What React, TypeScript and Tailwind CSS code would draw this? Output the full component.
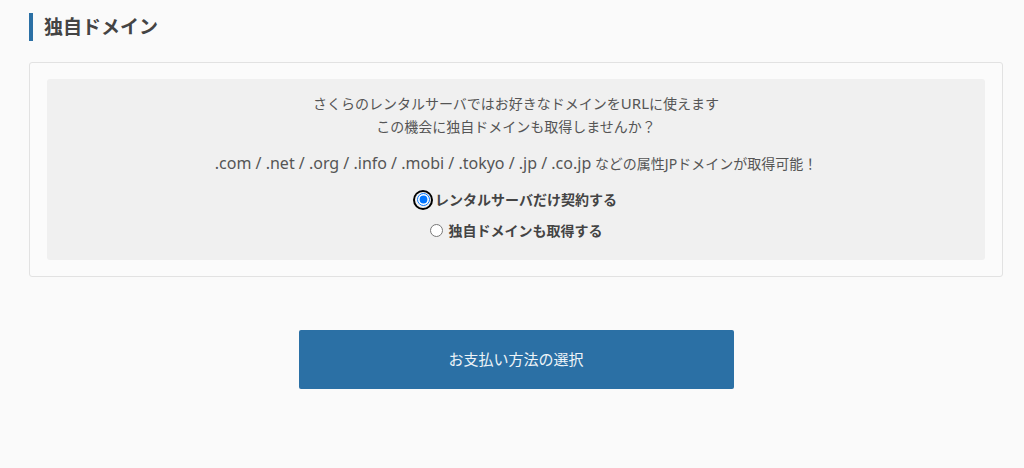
import React, { useState } from "react";

const font = {
  fontFamily: '"Noto Sans", "Noto Sans CJK JP", sans-serif',
};

const App = () => {
  const [choice, setChoice] = useState("rental");

  return (
    <div className="min-h-[468px] w-full bg-[#fafafa] text-[#555]" style={font}>
      <div className="pl-[29px] pr-[21px] pt-[13px]">
        <h2 className="flex h-[28px] items-center border-l-4 border-[#2b70a5] pl-[11px] text-[19px] font-bold leading-none text-[#444]">
          独自ドメイン
        </h2>

        <div className="mt-[21px] rounded-[3px] border border-[#e2e2e2] bg-[#fbfbfb] px-[17px] py-[16px]">
          <div className="flex flex-col items-center rounded-[3px] bg-[#f0f0f0] pt-[13px] pb-[18px] text-[14px] leading-[23px]">
            <p>
              さくらのレンタルサーバではお好きなドメインを<span className="text-[15px]">URL</span>に使えます
            </p>
            <p>この機会に独自ドメインも取得しませんか？</p>
            <p className="mt-[14px]">
              <span className="text-[16px]">.com / .net / .org / .info / .mobi / .tokyo / .jp / .co.jp</span>{" "}
              などの属性JPドメインが取得可能！
            </p>
            <label className="mt-[13px] flex items-center gap-[4px] text-[14px] font-bold text-[#444]">
              <span className="flex h-[16px] w-[16px] items-center justify-center rounded-full ring-2 ring-black">
                <input
                  type="radio"
                  name="domain"
                  checked={choice === "rental"}
                  onChange={() => setChoice("rental")}
                  className="m-0 h-[13px] w-[13px] accent-[#0075ff] outline-none"
                />
              </span>
              レンタルサーバだけ契約する
            </label>
            <label className="mt-[8px] flex items-center gap-[6px] text-[14px] font-bold text-[#444]">
              <input
                type="radio"
                name="domain"
                checked={choice === "own"}
                onChange={() => setChoice("own")}
                className="m-0 h-[13px] w-[13px]"
              />
              独自ドメインも取得する
            </label>
          </div>
        </div>

        <div className="mt-[53px] flex justify-center">
          <button
            type="button"
            className="h-[59px] w-[435px] rounded-[2px] bg-[#2b70a5] text-[15px] text-[#eef4f8]"
          >
            お支払い方法の選択
          </button>
        </div>
      </div>
    </div>
  );
};

export default App;
